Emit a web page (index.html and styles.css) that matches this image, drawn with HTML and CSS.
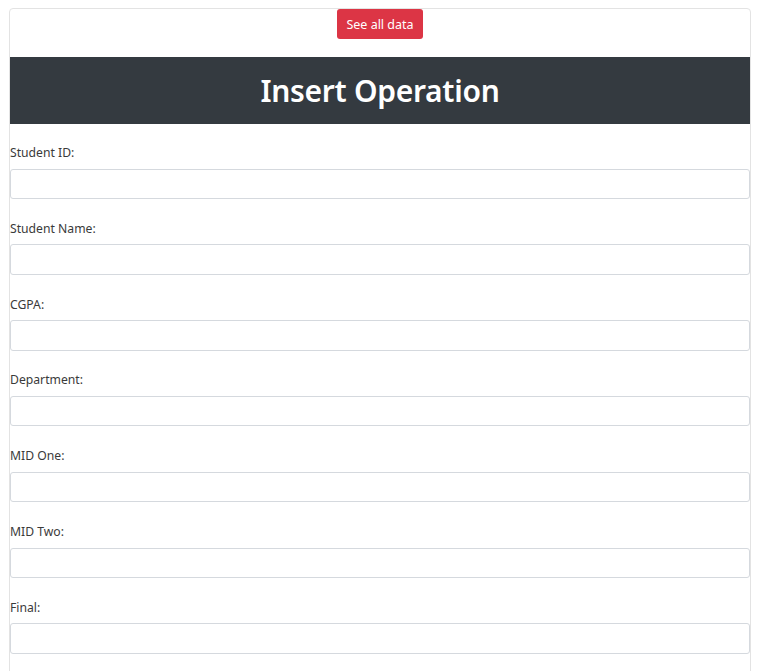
FILE: index.html
```html
<!DOCTYPE html>
<html lang="en">
<head>
<meta charset="utf-8">
<title>Insert Operation</title>
<link rel="stylesheet" href="styles.css">
</head>
<body>
<div class="card">
  <div class="top">
    <button class="btn-danger" type="button">See all data</button>
  </div>
  <div class="banner">
    <h1>Insert Operation</h1>
  </div>
  <form class="form">
    <div class="group"><label>Student ID:</label><input type="text"></div>
    <div class="group"><label>Student Name:</label><input type="text"></div>
    <div class="group"><label>CGPA:</label><input type="text"></div>
    <div class="group"><label>Department:</label><input type="text"></div>
    <div class="group"><label>MID One:</label><input type="text"></div>
    <div class="group"><label>MID Two:</label><input type="text"></div>
    <div class="group"><label>Final:</label><input type="text"></div>
  </form>
</div>
</body>
</html>
```

FILE: styles.css
```css
html, body {
  margin: 0;
  padding: 0;
  background: #fff;
}
body {
  font-family: "Noto Sans", "Open Sans", sans-serif;
  color: #212529;
  overflow: hidden;
  height: 671px;
}
.card {
  margin: 8px 0 0 9px;
  width: 740px;
  border: 1px solid #e3e3e3;
  border-radius: 4px;
  height: 700px;
}
.top {
  display: flex;
  justify-content: center;
  height: 48px;
}
.btn-danger {
  background: #dc3545;
  color: #fff;
  border: none;
  border-radius: 3px;
  width: 86px;
  height: 30px;
  font-family: inherit;
  font-size: 12.5px;
  padding: 0;
  margin-top: 0;
}
.banner {
  background: #343a40;
  height: 67px;
  display: flex;
  align-items: center;
  justify-content: center;
}
.banner h1 {
  margin: 0;
  color: #fff;
  font-size: 30px;
  font-weight: 600;
  letter-spacing: -0.3px;
}
.form {
  padding-top: 19px;
}
.group {
  display: flex;
  flex-direction: column;
  margin-bottom: 19.8px;
}
.group label {
  font-size: 12.2px;
  line-height: 19.2px;
  color: #3a3a3a;
  margin-bottom: 6.4px;
}
.group input {
  box-sizing: border-box;
  height: 30.4px;
  width: 100%;
  border: 1px solid #d5d9de;
  border-radius: 3px;
  margin: 0;
  padding: 0 10px;
  font-family: inherit;
}
```
